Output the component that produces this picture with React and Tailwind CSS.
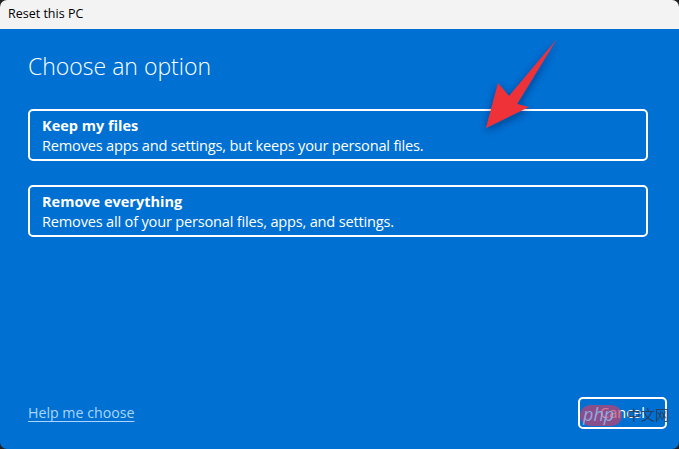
import React from 'react';

const font = { fontFamily: '"Open Sans", "Noto Sans", sans-serif' };

function Option({ title, desc }) {
  return (
    <button className="w-full h-[52px] rounded-[5px] border-2 border-white px-[12px] text-left text-white flex flex-col justify-center">
      <span className="text-[14.5px] font-bold leading-[19px]">{title}</span>
      <span className="text-[14.6px] leading-[20px] tracking-[-0.2px]">{desc}</span>
    </button>
  );
}

export default function App() {
  return (
    <div className="w-[679px] h-[449px] bg-[#202020] overflow-hidden" style={font}>
      <div className="w-full h-full rounded-[7px] overflow-hidden flex flex-col relative">
        {/* title bar */}
        <div className="h-[29px] bg-[#f3f3f3] flex items-center px-[8px] text-[12.5px] text-black">
          Reset this PC
        </div>

        {/* body */}
        <div className="flex-1 bg-[#0070d3] flex flex-col px-[28px] pb-[20px]">
          <h1 className="mt-[22px] text-[23px] font-light leading-[30px] text-white">Choose an option</h1>

          <div className="mt-[28px] flex flex-col gap-[24px] pr-[3px]">
            <Option title="Keep my files" desc="Removes apps and settings, but keeps your personal files." />
            <Option title="Remove everything" desc="Removes all of your personal files, apps, and settings." />
          </div>

          <div className="flex-1" />

          <div className="flex items-center justify-between mr-[-16px]">
            <a className="text-[14.2px] text-[#a9d6ff] underline underline-offset-[3px] decoration-1">Help me choose</a>
            <button className="relative w-[89px] h-[32px] rounded-[5px] border-2 border-white text-white text-[14.5px]">
              Cancel
              {/* watermark */}
              <span className="absolute left-[0px] top-[6px] w-[42px] h-[21px] rounded-full bg-[#c5416b]/70" />
              <span className="absolute left-[3px] top-[4px] whitespace-nowrap text-[18px] italic text-[#8fb6ea]/90 leading-[22px]">php</span>
              <span className="absolute left-[47px] top-[5px] whitespace-nowrap text-[14px] text-[#2a3a55]/90 leading-[20px]" style={{ fontFamily: '"Noto Sans CJK SC", sans-serif' }}>中文网</span>
            </button>
          </div>
        </div>

        {/* red annotation arrow */}
        <svg className="absolute left-0 top-0 pointer-events-none" width="679" height="449">
          <defs>
            <filter id="sh" x="-50%" y="-50%" width="200%" height="200%">
              <feDropShadow dx="0" dy="3" stdDeviation="4" floodColor="#00183a" floodOpacity="0.5" />
            </filter>
          </defs>
          <polygon
            points="486,128 498,83 509,96 557,39 517,104 529,107"
            fill="#ef3038"
            filter="url(#sh)"
          />
        </svg>
      </div>
    </div>
  );
}
